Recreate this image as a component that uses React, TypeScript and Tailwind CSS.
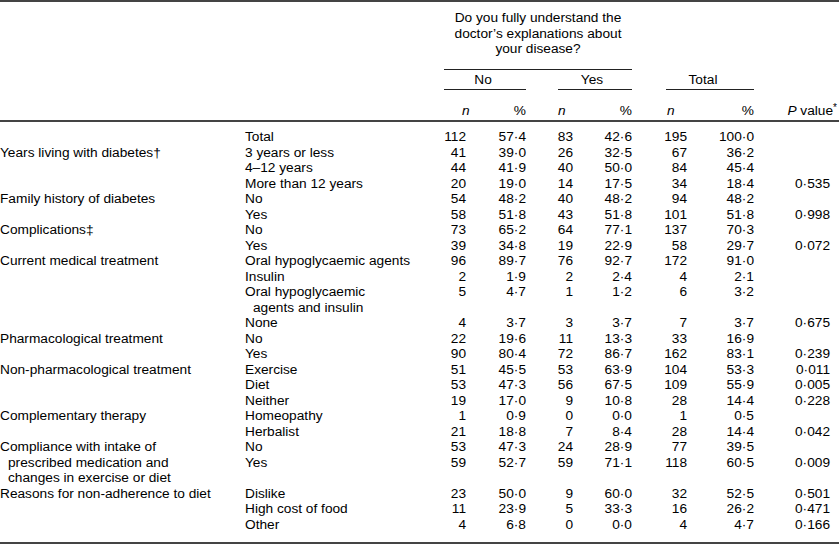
import React from "react";

type Sub = { s: string[]; v: string[] };
type Group = { l: string[]; subs: Sub[] };

const groups: Group[] = [
  { l: [], subs: [{ s: ["Total"], v: ["112", "57·4", "83", "42·6", "195", "100·0", ""] }] },
  {
    l: ["Years living with diabetes†"],
    subs: [
      { s: ["3 years or less"], v: ["41", "39·0", "26", "32·5", "67", "36·2", ""] },
      { s: ["4–12 years"], v: ["44", "41·9", "40", "50·0", "84", "45·4", ""] },
      { s: ["More than 12 years"], v: ["20", "19·0", "14", "17·5", "34", "18·4", "0·535"] },
    ],
  },
  {
    l: ["Family history of diabetes"],
    subs: [
      { s: ["No"], v: ["54", "48·2", "40", "48·2", "94", "48·2", ""] },
      { s: ["Yes"], v: ["58", "51·8", "43", "51·8", "101", "51·8", "0·998"] },
    ],
  },
  {
    l: ["Complications‡"],
    subs: [
      { s: ["No"], v: ["73", "65·2", "64", "77·1", "137", "70·3", ""] },
      { s: ["Yes"], v: ["39", "34·8", "19", "22·9", "58", "29·7", "0·072"] },
    ],
  },
  {
    l: ["Current medical treatment"],
    subs: [
      { s: ["Oral hypoglycaemic agents"], v: ["96", "89·7", "76", "92·7", "172", "91·0", ""] },
      { s: ["Insulin"], v: ["2", "1·9", "2", "2·4", "4", "2·1", ""] },
      { s: ["Oral hypoglycaemic", "agents and insulin"], v: ["5", "4·7", "1", "1·2", "6", "3·2", ""] },
      { s: ["None"], v: ["4", "3·7", "3", "3·7", "7", "3·7", "0·675"] },
    ],
  },
  {
    l: ["Pharmacological treatment"],
    subs: [
      { s: ["No"], v: ["22", "19·6", "11", "13·3", "33", "16·9", ""] },
      { s: ["Yes"], v: ["90", "80·4", "72", "86·7", "162", "83·1", "0·239"] },
    ],
  },
  {
    l: ["Non-pharmacological treatment"],
    subs: [
      { s: ["Exercise"], v: ["51", "45·5", "53", "63·9", "104", "53·3", "0·011"] },
      { s: ["Diet"], v: ["53", "47·3", "56", "67·5", "109", "55·9", "0·005"] },
      { s: ["Neither"], v: ["19", "17·0", "9", "10·8", "28", "14·4", "0·228"] },
    ],
  },
  {
    l: ["Complementary therapy"],
    subs: [
      { s: ["Homeopathy"], v: ["1", "0·9", "0", "0·0", "1", "0·5", ""] },
      { s: ["Herbalist"], v: ["21", "18·8", "7", "8·4", "28", "14·4", "0·042"] },
    ],
  },
  {
    l: ["Compliance with intake of", "prescribed medication and", "changes in exercise or diet"],
    subs: [
      { s: ["No"], v: ["53", "47·3", "24", "28·9", "77", "39·5", ""] },
      { s: ["Yes"], v: ["59", "52·7", "59", "71·1", "118", "60·5", "0·009"] },
    ],
  },
  {
    l: ["Reasons for non-adherence to diet"],
    subs: [
      { s: ["Dislike"], v: ["23", "50·0", "9", "60·0", "32", "52·5", "0·501"] },
      { s: ["High cost of food"], v: ["11", "23·9", "5", "33·3", "16", "26·2", "0·471"] },
      { s: ["Other"], v: ["4", "6·8", "0", "0·0", "4", "4·7", "0·166"] },
    ],
  },
];

function Lines({ lines }: { lines: string[] }) {
  return (
    <div>
      {lines.map((t, i) => (
        <div key={i} className={i > 0 ? "pl-[8px] whitespace-nowrap" : "whitespace-nowrap"}>
          {t}
        </div>
      ))}
    </div>
  );
}

export default function App() {
  return (
    <div
      className="w-[839px] h-[544px] bg-white text-black text-[13.7px] leading-[15.5px] overflow-hidden"
      style={{ fontFamily: '"Liberation Sans", Arial, Helvetica, sans-serif' }}
    >
      <div className="h-[2px] bg-[#444]" />
      {/* header */}
      <div className="flex h-[118px]">
        <div className="w-[444px] shrink-0" />
        <div className="flex flex-col w-[395px]">
          <div className="w-[188px] pt-[8px] text-center">
            <div>Do you fully understand the</div>
            <div>doctor’s explanations about</div>
            <div>your disease?</div>
          </div>
          <div className="w-[188px] h-px bg-[#222] mt-[12px]" />
          <div className="flex mt-[2px]">
            <div className="w-[82px] text-center pr-[4px]">No</div>
            <div className="w-[32px]" />
            <div className="w-[74px] text-center pr-[6px]">Yes</div>
            <div className="w-[34px]" />
            <div className="w-[88px] text-center pr-[14px]">Total</div>
          </div>
          <div className="flex mt-[2px]">
            <div className="w-[82px] h-px bg-[#222]" />
            <div className="w-[32px]" />
            <div className="w-[74px] h-px bg-[#222]" />
            <div className="w-[34px]" />
            <div className="w-[88px] h-px bg-[#222]" />
          </div>
          <div className="grid grid-cols-[22px_60px_47px_59px_55px_67px_84px] mt-[12.5px]">
            <div className="italic pl-[18px]">n</div>
            <div className="text-right">%</div>
            <div className="italic pl-[32px]">n</div>
            <div className="text-right">%</div>
            <div className="italic pl-[35px]">n</div>
            <div className="text-right">%</div>
            <div className="text-right whitespace-nowrap pr-[1px]">
              <span className="italic">P</span> value<span className="text-[10px] relative top-[-4px]">*</span>
            </div>
          </div>
        </div>
      </div>
      <div className="h-[2px] bg-[#444]" />
      {/* body */}
      <div className="mt-[7px] h-[403px]">
        {groups.map((g, gi) => (
          <div key={gi} className="flex">
            <div className="w-[245px] shrink-0">
              <Lines lines={g.l} />
            </div>
            <div className="flex flex-col">
              {g.subs.map((sub, si) => (
                <div key={si} className="grid grid-cols-[199px_22px_60px_47px_59px_55px_67px_84px]">
                  <Lines lines={sub.s} />
                  {sub.v.map((v, vi) => (
                    <div key={vi} className={vi === 6 ? "text-right pr-[8px]" : "text-right"}>
                      {v}
                    </div>
                  ))}
                </div>
              ))}
            </div>
          </div>
        ))}
      </div>
      <div className="mt-[10px] h-[2px] bg-[#444]" />
    </div>
  );
}
